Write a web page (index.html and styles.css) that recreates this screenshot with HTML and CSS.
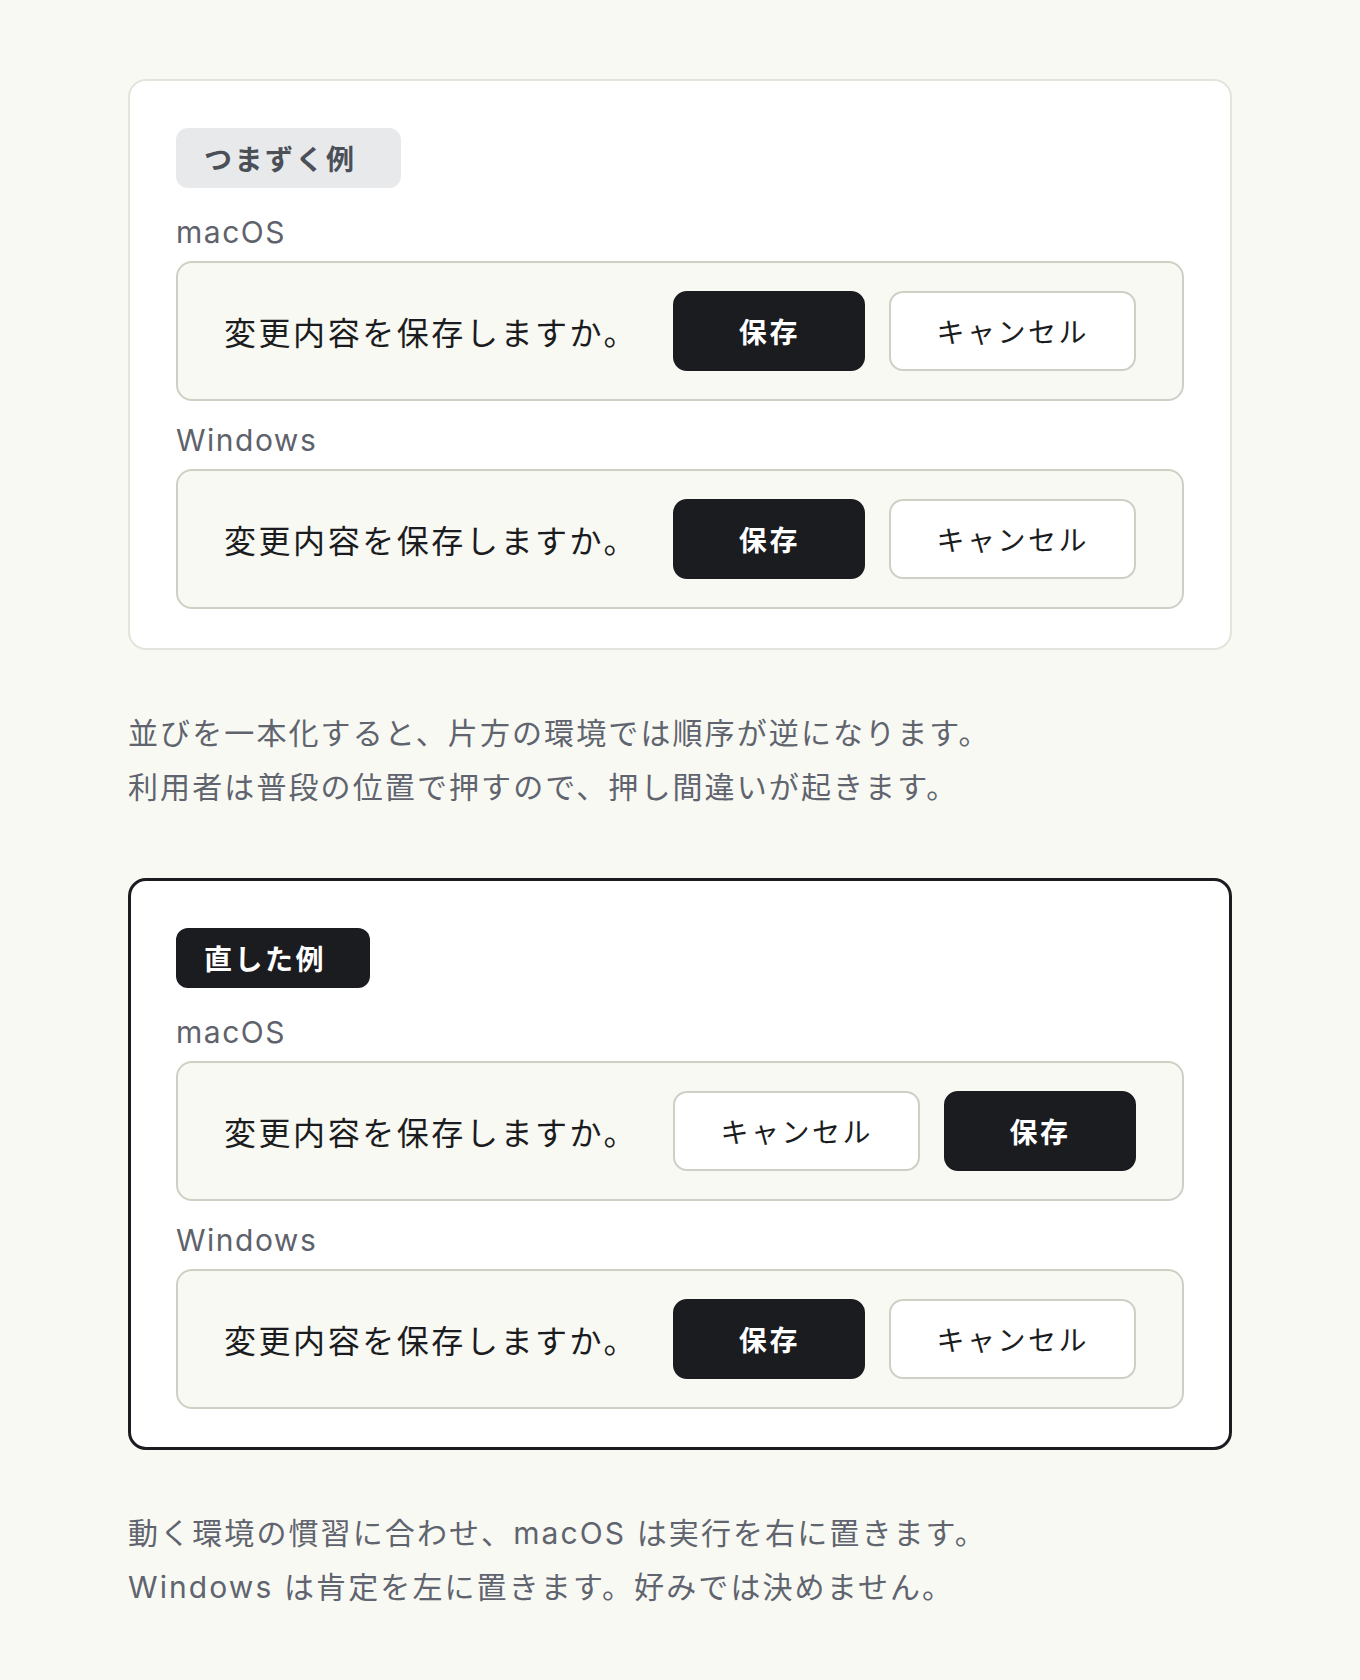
FILE: index.html
```html
<!DOCTYPE html>
<html lang="ja">
<head>
    <meta charset="UTF-8">
    <meta name="viewport" content="width=device-width, initial-scale=1.0">
    <title>ボタンの並び順</title>
    <link rel="stylesheet" href="styles.css">
</head>
<body>
    <main class="page">
        <!-- Bad example: same order on every platform -->
        <section class="example">
            <span class="tag">つまずく例</span>

            <div class="platform">
                <div class="platform-name">macOS</div>
                <div class="dialog">
                    <p class="dialog-text">変更内容を保存しますか。</p>
                    <div class="dialog-actions">
                        <button class="btn btn-primary">保存</button>
                        <button class="btn btn-secondary">キャンセル</button>
                    </div>
                </div>
            </div>

            <div class="platform">
                <div class="platform-name">Windows</div>
                <div class="dialog">
                    <p class="dialog-text">変更内容を保存しますか。</p>
                    <div class="dialog-actions">
                        <button class="btn btn-primary">保存</button>
                        <button class="btn btn-secondary">キャンセル</button>
                    </div>
                </div>
            </div>
        </section>

        <p class="note">並びを一本化すると、片方の環境では順序が逆になります。<br>利用者は普段の位置で押すので、押し間違いが起きます。</p>

        <!-- Fixed example: follow each platform's convention -->
        <section class="example example-good">
            <span class="tag tag-good">直した例</span>

            <div class="platform">
                <div class="platform-name">macOS</div>
                <div class="dialog">
                    <p class="dialog-text">変更内容を保存しますか。</p>
                    <div class="dialog-actions">
                        <button class="btn btn-secondary">キャンセル</button>
                        <button class="btn btn-primary">保存</button>
                    </div>
                </div>
            </div>

            <div class="platform">
                <div class="platform-name">Windows</div>
                <div class="dialog">
                    <p class="dialog-text">変更内容を保存しますか。</p>
                    <div class="dialog-actions">
                        <button class="btn btn-primary">保存</button>
                        <button class="btn btn-secondary">キャンセル</button>
                    </div>
                </div>
            </div>
        </section>

        <p class="note">動く環境の慣習に合わせ、macOS は実行を右に置きます。<br>Windows は肯定を左に置きます。好みでは決めません。</p>
    </main>
</body>
</html>
```

FILE: styles.css
```css
/* Base */
body {
    margin: 0;
    background-color: #f9f9f4;
    color: #1b1c20;
    font-family: Inter, "Noto Sans CJK JP", sans-serif;
    letter-spacing: 0.05em;
}

.page {
    max-width: 1104px;
    margin: 0 auto;
    padding: 79px 0 80px;
}

/* Example cards */
.example {
    background-color: #fff;
    border: 2px solid #e4e4dc;
    border-radius: 18px;
    padding: 47px 46px 39px;
    display: flex;
    flex-direction: column;
    align-items: flex-start;
    gap: 18px;
}

.example-good {
    border: 3px solid #1b1c20;
    padding: 47px 45px 38px;
}

.tag {
    display: inline-flex;
    align-items: center;
    height: 60px;
    padding: 0 44px 0 28px;
    margin-bottom: 5px;
    border-radius: 12px;
    background-color: #e8e9eb;
    color: #4b4f58;
    font-size: 28px;
    font-weight: 700;
    letter-spacing: 0.09em;
}

.tag-good {
    background-color: #1b1c20;
    color: #fff;
}

.platform {
    align-self: stretch;
}

.platform-name {
    font-size: 30px;
    line-height: 42px;
    color: #5e626b;
    letter-spacing: 0.05em;
    margin-bottom: 8px;
}

/* Dialog mock */
.dialog {
    display: flex;
    align-items: center;
    justify-content: space-between;
    gap: 24px;
    padding: 28px 46px;
    background-color: #f9f9f4;
    border: 2px solid #cfcfc5;
    border-radius: 16px;
}

.dialog-text {
    margin: 0;
    font-size: 32px;
    letter-spacing: 0.08em;
    white-space: nowrap;
}

.dialog-actions {
    display: flex;
    flex-shrink: 0;
    gap: 24px;
}

.btn {
    box-sizing: border-box;
    height: 80px;
    min-width: 192px;
    padding: 0 45px;
    border-radius: 14px;
    font-family: inherit;
    font-size: 28px;
    letter-spacing: 0.09em;
    cursor: pointer;
}

.btn-primary {
    background-color: #1b1c20;
    border: 2px solid #1b1c20;
    color: #fff;
    font-weight: 700;
}

.btn-secondary {
    background-color: #fff;
    border: 2px solid #cfcfc5;
    color: #1b1c20;
}

/* Notes under each card */
.note {
    margin: 56px 0 64px;
    font-size: 30px;
    line-height: 54px;
    color: #60646e;
    letter-spacing: 0.07em;
}
```
